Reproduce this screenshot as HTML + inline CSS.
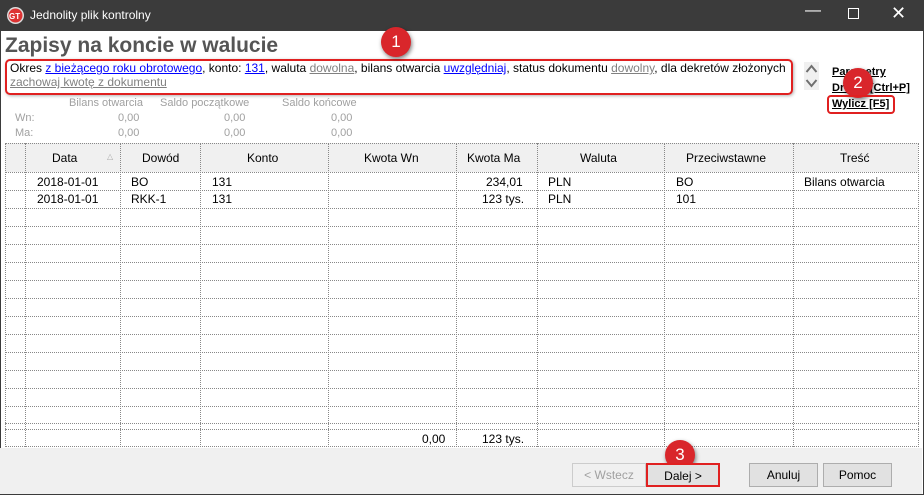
<!DOCTYPE html>
<html><head><meta charset="utf-8"><style>
*{margin:0;padding:0;box-sizing:border-box}
body{width:924px;height:495px;overflow:hidden;background:#fff;font-family:"Liberation Sans",sans-serif;font-size:12px;position:relative;color:#000}
.a{position:absolute;white-space:nowrap}
.tb{left:0;top:0;width:924px;height:31px;background:#3b3b3b;color:#fff}
.lnk{color:#00f;text-decoration:underline}
.gl{color:#808080;text-decoration:underline}
.g{color:#a0a0a0}
.badge{width:30px;height:30px;border-radius:50%;background:#d9262b;color:#fff;font-size:17px;text-align:center;line-height:30px;box-shadow:1px 2px 4px rgba(0,0,0,.5)}
.btn{height:24px;border:1px solid #adadad;background:#e1e1e1;text-align:center;line-height:22px}
.vl{position:absolute;width:0;border-left:1px dotted #888}
.hl{position:absolute;height:0;border-top:1px dotted #888}
</style></head><body>
<div class="a tb">
  <svg class="a" style="left:6px;top:6px" width="19" height="19"><circle cx="9.5" cy="9.5" r="8.5" fill="#ddd"/><circle cx="9.5" cy="9.5" r="7" fill="#d33"/><text x="3" y="13" font-size="8" font-weight="bold" fill="#fff" font-family="Liberation Sans">GT</text></svg>
  <div class="a" style="left:30px;top:8px;font-size:12px">Jednolity plik kontrolny</div>
  <div class="a" style="left:805px;top:2px;font-size:16px">&#8212;</div>
  <div class="a" style="left:848px;top:8px;width:11px;height:11px;border:1px solid #fff"></div>
  <div class="a" style="left:891px;top:3px;font-size:18px">&#10005;</div>
</div>
<div class="a" style="left:0;top:31px;width:924px;height:464px;border:1px solid #3b3b3b;border-top:0"></div>
<div class="a" style="left:5px;top:34px;font-size:21px;font-weight:bold;color:#555">Zapisy na koncie w walucie</div>
<div class="a" style="left:5px;top:59px;width:788px;height:36px;border:2px solid #e02020;border-radius:5px;box-shadow:1px 1px 3px rgba(0,0,0,.3)"></div>
<div class="a" style="left:10px;top:61px">Okres <span class="lnk">z bieżącego roku obrotowego</span>, konto: <span class="lnk">131</span>, waluta <span class="gl">dowolna</span>, bilans otwarcia <span class="lnk">uwzględniaj</span>, status dokumentu <span class="gl">dowolny</span>, dla dekretów złożonych</div>
<div class="a" style="left:10px;top:75px"><span class="gl">zachowaj kwotę z dokumentu</span></div>
<div class="a badge" style="left:381px;top:27px">1</div>
<svg class="a" style="left:804px;top:62px" width="15" height="28"><rect width="15" height="28" fill="#f0f0f0"/><path d="M2.5 10 L7.5 4 L12.5 10 M2.5 18 L7.5 24 L12.5 18" stroke="#707070" stroke-width="2" fill="none"/></svg>
<div class="a" style="left:832px;top:66px;font-size:11px;font-weight:bold;text-decoration:underline">Parametry</div>
<div class="a" style="left:832px;top:82px;font-size:11px;font-weight:bold;text-decoration:underline">Drukuj [Ctrl+P]</div>
<div class="a badge" style="left:843px;top:68px">2</div>
<div class="a" style="left:827px;top:95px;width:68px;height:19px;border:2px solid #e02020;border-radius:4px"></div>
<div class="a" style="left:832px;top:98px;font-size:11px;font-weight:bold;text-decoration:underline">Wylicz [F5]</div>
<div class="a g" style="left:69px;top:97px;font-size:11px">Bilans otwarcia</div>
<div class="a g" style="left:160px;top:97px;font-size:11px">Saldo początkowe</div>
<div class="a g" style="left:282px;top:97px;font-size:11px">Saldo końcowe</div>
<div class="a g" style="left:15px;top:112px;font-size:11px">Wn:</div>
<div class="a g" style="left:15px;top:127px;font-size:11px">Ma:</div>
<div class="a g" style="left:118px;top:112px;font-size:11px">0,00</div><div class="a g" style="left:224px;top:112px;font-size:11px">0,00</div><div class="a g" style="left:331px;top:112px;font-size:11px">0,00</div>
<div class="a g" style="left:118px;top:127px;font-size:11px">0,00</div><div class="a g" style="left:224px;top:127px;font-size:11px">0,00</div><div class="a g" style="left:331px;top:127px;font-size:11px">0,00</div>
<div class="a" style="left:5px;top:143px;width:913px;height:29px;background:#f0f0f0"></div>
<div class="a" style="left:0;top:448px;width:922px;height:46px;background:#f0f0f0"></div>
<div class="hl" style="left:5px;top:143px;width:914px"></div>
<div class="hl" style="left:5px;top:172px;width:914px"></div>
<div class="hl" style="left:5px;top:190px;width:914px"></div>
<div class="hl" style="left:5px;top:208px;width:914px"></div>
<div class="hl" style="left:5px;top:226px;width:914px"></div>
<div class="hl" style="left:5px;top:244px;width:914px"></div>
<div class="hl" style="left:5px;top:262px;width:914px"></div>
<div class="hl" style="left:5px;top:280px;width:914px"></div>
<div class="hl" style="left:5px;top:298px;width:914px"></div>
<div class="hl" style="left:5px;top:316px;width:914px"></div>
<div class="hl" style="left:5px;top:334px;width:914px"></div>
<div class="hl" style="left:5px;top:352px;width:914px"></div>
<div class="hl" style="left:5px;top:370px;width:914px"></div>
<div class="hl" style="left:5px;top:388px;width:914px"></div>
<div class="hl" style="left:5px;top:406px;width:914px"></div>
<div class="hl" style="left:5px;top:423px;width:914px"></div>
<div class="hl" style="left:5px;top:429px;width:914px"></div>
<div class="hl" style="left:5px;top:446px;width:914px"></div>
<div class="vl" style="left:5px;top:143px;height:304px"></div>
<div class="vl" style="left:25px;top:143px;height:304px"></div>
<div class="vl" style="left:120px;top:143px;height:304px"></div>
<div class="vl" style="left:200px;top:143px;height:304px"></div>
<div class="vl" style="left:328px;top:143px;height:304px"></div>
<div class="vl" style="left:456px;top:143px;height:304px"></div>
<div class="vl" style="left:537px;top:143px;height:304px"></div>
<div class="vl" style="left:664px;top:143px;height:304px"></div>
<div class="vl" style="left:793px;top:143px;height:304px"></div>
<div class="vl" style="left:918px;top:143px;height:304px"></div>
<div class="a" style="left:52px;top:151px">Data</div><div class="a" style="left:107px;top:152px;font-size:8px;color:#aaa">&#9651;</div>
<div class="a" style="left:142px;top:151px">Dowód</div>
<div class="a" style="left:247px;top:151px">Konto</div>
<div class="a" style="left:364px;top:151px">Kwota Wn</div>
<div class="a" style="left:467px;top:151px">Kwota Ma</div>
<div class="a" style="left:580px;top:151px">Waluta</div>
<div class="a" style="left:686px;top:151px">Przeciwstawne</div>
<div class="a" style="left:840px;top:151px">Treść</div>
<div class="a" style="left:37px;top:175px">2018-01-01</div><div class="a" style="left:131px;top:175px">BO</div><div class="a" style="left:212px;top:175px">131</div><div class="a" style="left:486px;top:175px">234,01</div><div class="a" style="left:548px;top:175px">PLN</div><div class="a" style="left:676px;top:175px">BO</div><div class="a" style="left:804px;top:175px">Bilans otwarcia</div>
<div class="a" style="left:37px;top:192px">2018-01-01</div><div class="a" style="left:131px;top:192px">RKK-1</div><div class="a" style="left:212px;top:192px">131</div><div class="a" style="left:482px;top:192px">123 tys.</div><div class="a" style="left:548px;top:192px">PLN</div><div class="a" style="left:676px;top:192px">101</div>
<div class="a" style="left:422px;top:432px">0,00</div><div class="a" style="left:482px;top:432px">123 tys.</div>
<div class="a badge" style="left:665px;top:440px">3</div>
<div class="a btn" style="left:572px;top:463px;width:74px;color:#a0a0a0;background:#f0f0f0;border-color:#ccc">&lt; Wstecz</div>
<div class="a btn" style="left:646px;top:463px;width:74px;border:2px solid #e02020">Dalej &gt;</div>
<div class="a btn" style="left:749px;top:463px;width:69px">Anuluj</div>
<div class="a btn" style="left:823px;top:463px;width:69px">Pomoc</div>
</body></html>
